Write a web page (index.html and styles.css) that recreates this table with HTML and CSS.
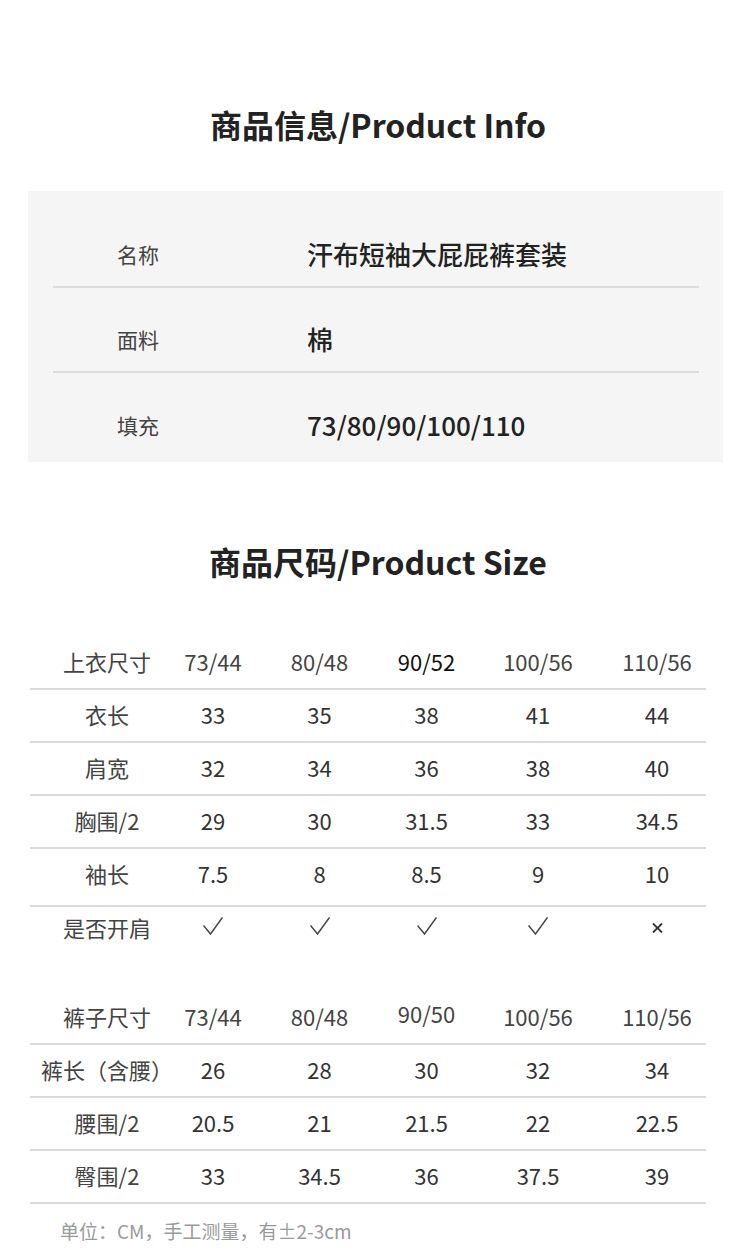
FILE: index.html
```html
<!DOCTYPE html>
<html lang="zh-CN">
<head>
<meta charset="utf-8">
<title>商品信息</title>
<link rel="stylesheet" href="styles.css">
</head>
<body>
<div class="page">
  <h2 class="title title-info">商品信息/Product Info</h2>
  <div class="panel">
    <div class="info-row">
      <div class="info-label">名称</div>
      <div class="info-value">汗布短袖大屁屁裤套装</div>
    </div>
    <div class="info-row">
      <div class="info-label">面料</div>
      <div class="info-value">棉</div>
    </div>
    <div class="info-row info-row-last">
      <div class="info-label">填充</div>
      <div class="info-value">73/80/90/100/110</div>
    </div>
  </div>

  <h2 class="title title-size">商品尺码/Product Size</h2>

  <div class="size-table table-top">
    <div class="srow head">
      <div class="c c0">上衣尺寸</div><div class="c">73/44</div><div class="c">80/48</div><div class="c dark">90/52</div><div class="c">100/56</div><div class="c c5">110/56</div>
    </div>
    <div class="srow">
      <div class="c c0">衣长</div><div class="c">33</div><div class="c">35</div><div class="c">38</div><div class="c">41</div><div class="c c5">44</div>
    </div>
    <div class="srow">
      <div class="c c0">肩宽</div><div class="c">32</div><div class="c">34</div><div class="c">36</div><div class="c">38</div><div class="c c5">40</div>
    </div>
    <div class="srow">
      <div class="c c0">胸围/2</div><div class="c">29</div><div class="c">30</div><div class="c">31.5</div><div class="c">33</div><div class="c c5">34.5</div>
    </div>
    <div class="srow tall">
      <div class="c c0">袖长</div><div class="c">7.5</div><div class="c">8</div><div class="c">8.5</div><div class="c">9</div><div class="c c5">10</div>
    </div>
    <div class="srow no-line short">
      <div class="c c0">是否开肩</div>
      <div class="c mark"><svg class="check" viewBox="0 0 20 18" width="20" height="18" aria-label="√"><polyline points="0.5,8.5 7.5,17 19.5,0.5" fill="none" stroke="#444" stroke-width="1.5"/></svg></div>
      <div class="c mark"><svg class="check" viewBox="0 0 20 18" width="20" height="18" aria-label="√"><polyline points="0.5,8.5 7.5,17 19.5,0.5" fill="none" stroke="#444" stroke-width="1.5"/></svg></div>
      <div class="c mark"><svg class="check" viewBox="0 0 20 18" width="20" height="18" aria-label="√"><polyline points="0.5,8.5 7.5,17 19.5,0.5" fill="none" stroke="#444" stroke-width="1.5"/></svg></div>
      <div class="c mark"><svg class="check" viewBox="0 0 20 18" width="20" height="18" aria-label="√"><polyline points="0.5,8.5 7.5,17 19.5,0.5" fill="none" stroke="#444" stroke-width="1.5"/></svg></div>
      <div class="c c5 mark"><svg class="cross" viewBox="0 0 11 10" width="11" height="10" aria-label="×"><path d="M1,0.5 L10,9.5 M10,0.5 L1,9.5" fill="none" stroke="#333" stroke-width="1.8"/></svg></div>
    </div>
  </div>

  <div class="size-table table-bottom">
    <div class="srow head">
      <div class="c c0">裤子尺寸</div><div class="c">73/44</div><div class="c">80/48</div><div class="c raised">90/50</div><div class="c">100/56</div><div class="c c5">110/56</div>
    </div>
    <div class="srow">
      <div class="c c0">裤长（含腰）</div><div class="c">26</div><div class="c">28</div><div class="c">30</div><div class="c">32</div><div class="c c5">34</div>
    </div>
    <div class="srow">
      <div class="c c0">腰围/2</div><div class="c">20.5</div><div class="c">21</div><div class="c">21.5</div><div class="c">22</div><div class="c c5">22.5</div>
    </div>
    <div class="srow">
      <div class="c c0">臀围/2</div><div class="c">33</div><div class="c">34.5</div><div class="c">36</div><div class="c">37.5</div><div class="c c5">39</div>
    </div>
  </div>

  <p class="note">单位：CM，手工测量，有±2-3cm</p>
</div>
</body>
</html>
```

FILE: styles.css
```css
html, body {
  margin: 0;
  padding: 0;
  background: #ffffff;
}

body {
  font-family: "Noto Sans CJK SC", "Noto Sans", sans-serif;
  color: #333333;
}

.page {
  width: 750px;
  height: 1257px;
  overflow: hidden;
}

.title {
  margin: 0;
  padding-left: 6px;
  font-size: 32px;
  line-height: 40px;
  font-weight: 700;
  color: #222222;
  text-align: center;
}

.title-info {
  padding-top: 104px;
}

.title-size {
  margin-top: 79px;
}

/* info panel */
.panel {
  margin: 47px 27px 0 28px;
  background: #f5f5f5;
  padding: 12px 24px 4px 25px;
}

.info-row {
  display: flex;
  align-items: center;
  box-sizing: border-box;
  height: 85px;
  padding-top: 22px;
  padding-bottom: 4px;
  border-bottom: 2px solid #dcdcdc;
}

.info-row-last {
  border-bottom: none;
}

.info-label {
  width: 190px;
  padding-left: 64px;
  font-size: 21px;
  color: #444444;
}

.info-value {
  font-size: 26px;
  font-weight: 500;
  color: #222222;
}

/* size tables */
.size-table {
  width: 676px;
  margin-left: 30px;
}

.table-top {
  margin-top: 56px;
}

.table-bottom {
  margin-top: 37px;
}

.srow {
  display: grid;
  grid-template-columns: 130px 106px 107px 107px 116px 110px;
  align-items: center;
  box-sizing: border-box;
  height: 53px;
  padding-bottom: 4px;
  border-bottom: 2px solid #dadada;
}

.srow.tall {
  height: 58px;
  padding-bottom: 9px;
}

.srow.short {
  height: 48px;
  padding-bottom: 9px;
}

.srow.no-line {
  border-bottom: none;
}

.c {
  display: flex;
  justify-content: center;
  white-space: nowrap;
  font-size: 22px;
  color: #333333;
}

.c0 {
  padding-left: 24px;
  color: #444444;
}

.c5 {
  padding-left: 12px;
}

.head .c {
  color: #444444;
}

.head .dark {
  color: #111111;
}

.raised {
  position: relative;
  top: -3px;
}

.mark {
  align-items: center;
}

.check {
  display: block;
  margin-top: -2px;
}

.cross {
  display: block;
  margin-top: 2px;
}

.note {
  margin: 13px 0 0 60px;
  font-size: 19px;
  line-height: 28px;
  color: #9a9a9a;
}
```
